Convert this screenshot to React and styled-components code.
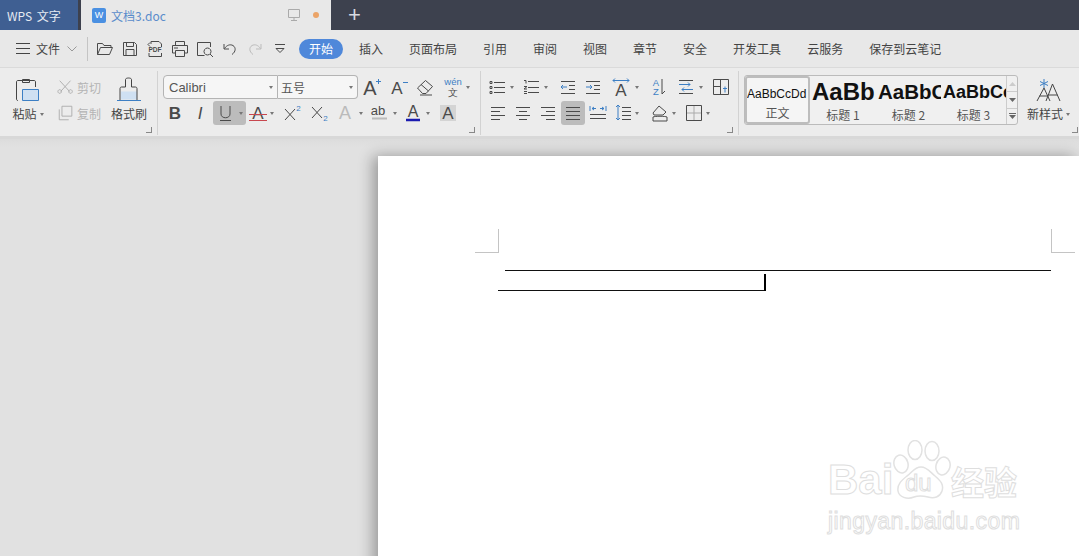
import React from 'react';
import styled, { createGlobalStyle } from 'styled-components';

const INK = '#4a4a4a';
const BLUE = '#3d7fc4';

const Svg = ({ size = 20, children }) => (
  <svg width={size} height={size} viewBox="0 0 20 20" fill="none" stroke={INK} strokeWidth="1" overflow="visible">
    {children}
  </svg>
);

const Letter = ({ x = 10, y = 16, s = 17, c = INK, w = 400, i = false, children }) => (
  <text
    x={x}
    y={y}
    fontSize={s}
    fill={c}
    stroke="none"
    fontWeight={w}
    fontStyle={i ? 'italic' : 'normal'}
    fontFamily="'Liberation Sans', sans-serif"
    textAnchor="middle"
  >
    {children}
  </text>
);

const Lines = ({ rows }) =>
  rows.map(([x1, x2, y, c], n) => <path key={n} d={`M${x1} ${y}.5H${x2}`} stroke={c || INK} />);

const ICONS = {
  open: <path d="M2.500 15.500v-11h5l1.500 2h7v2M2.500 15.500h12l3-7H5.500z" />,
  save: <path d="M3.500 3.500h11l2 2v11h-13zM6.500 3.500v4h7v-4M6 16.500v-6h8v6" />,
  pdf: (
    <>
      <path d="M6 5V2.500h8l2.500 2.500v3M4 14v3.500h12.500V14M3 5.500l2-2M3 5.500l2 2" />
      <Letter y={12.500} s={6.500} w={700}>PDF</Letter>
    </>
  ),
  print: <path d="M5.500 6V2.500h9V6M5 14H2.500V6.500h15V14H15M5.500 11.500h9v6h-9zM4 9h4" />,
  preview: <path d="M15.500 8V3.500h-13v13h7M12.500 9a3.500 3.500 0 1 0 .01 0M15 15l3 3" />,
  undo: <path d="M4 5v5h5M4.500 9.500C7 6 10 5 13 6.500c3 2 3 6-1 9" />,
  redo: <path d="M16 5v5h-5M15.500 9.500C13 6 10 5 7 6.500c-3 2-3 6 1 9" stroke="#bbb" />,
  more: <path d="M5 5.500h10M6 9.500l4 4 4-4z" />,
  fontUp: (
    <>
      <Letter x={8} y={18} s={20}>A</Letter>
      <path d="M14 4.500h5M16.500 2v5" stroke={BLUE} />
    </>
  ),
  fontDown: (
    <>
      <Letter x={8} y={17} s={17}>A</Letter>
      <path d="M14 5.500h5" stroke={BLUE} />
    </>
  ),
  eraser: <path d="M2.500 11l8-7.500 7 6-6.500 7H7.500zM6 7.500l7.500 6.500M5 18h12" />,
  wen: (
    <>
      <Letter y={8} s={9.500} c={BLUE}>wén</Letter>
      <Letter y={19} s={10}>文</Letter>
    </>
  ),
  bold: <Letter s={17} w={700}>B</Letter>,
  italic: <Letter s={17} i>I</Letter>,
  under: <path d="M5 3v8c0 5 9 5 9 0V3M4 17.500h11" />,
  strike: (
    <>
      <Letter s={17}>A</Letter>
      <path d="M1 11.500h18M1 17.500h18" stroke="#c8474f" />
    </>
  ),
  sup: (
    <>
      <path d="M3 6l10 11M13 6L3 17" />
      <Letter x={16.500} y={8} s={8} c={BLUE}>2</Letter>
    </>
  ),
  sub: (
    <>
      <path d="M3 4l10 11M13 4L3 15" />
      <Letter x={16.500} y={18} s={8} c={BLUE}>2</Letter>
    </>
  ),
  fx: <Letter s={18} c="#bbb">A</Letter>,
  mark: (
    <>
      <Letter x={8} y={12} s={13}>ab</Letter>
      <path d="M2 15.500h15" stroke="#bbb" strokeWidth="2" />
    </>
  ),
  color: (
    <>
      <Letter y={14} s={16}>A</Letter>
      <path d="M3 17h14" stroke="#1b1bb0" strokeWidth="2.500" />
    </>
  ),
  box: (
    <>
      <path d="M2 2h16v16H2z" fill="#d4d4d4" stroke="none" />
      <Letter s={17}>A</Letter>
    </>
  ),
  bullets: (
    <>
      <path d="M2 4.500h2v2H2zM2 9.500h2v2H2zM2 14.500h2v2H2z" />
      <Lines rows={[[6, 17, 5], [6, 17, 10], [6, 17, 15]]} />
    </>
  ),
  number: (
    <>
      <path d="M2 3.500h2v3M2 9.500h3l-3 2.500h3M2 14.500h3M2 16.500h3" />
      <Lines rows={[[6, 17, 4], [6, 17, 10], [6, 17, 15]]} />
    </>
  ),
  outdent: (
    <>
      <Lines rows={[[3, 17, 4], [11, 17, 8], [11, 17, 12], [3, 17, 16]]} />
      <path d="M9 10H3M5 8l-2 2 2 2" stroke={BLUE} />
    </>
  ),
  indent: (
    <>
      <Lines rows={[[3, 17, 4], [11, 17, 8], [11, 17, 12], [3, 17, 16]]} />
      <path d="M3 10h6M7 8l2 2-2 2" stroke={BLUE} />
    </>
  ),
  width: (
    <>
      <Letter y={18.500} s={17}>A</Letter>
      <path d="M2 3.500h16M4 1.500l-2 2 2 2M16 1.500l2 2-2 2" stroke={BLUE} />
    </>
  ),
  sort: (
    <>
      <Letter x={7} y={9} s={9.500} c={BLUE}>A</Letter>
      <Letter x={7} y={18} s={9.500} c={BLUE}>Z</Letter>
      <path d="M13 2v15l3-3" />
    </>
  ),
  para: (
    <>
      <Lines rows={[[3, 17, 3], [3, 17, 16]]} />
      <path d="M3 7.500h11M12 5.500l2 2-2 2M17 12.500H6M8 10.500l-2 2 2 2" stroke={BLUE} />
    </>
  ),
  table: (
    <>
      <path d="M2.500 2.500h15v15h-15zM2.500 9.500h7M9.500 2.500v15" />
      <path d="M12 11.500h4M14 9.500v6" stroke={BLUE} />
    </>
  ),
  left: <Lines rows={[[3, 17, 4], [3, 12, 8], [3, 17, 12], [3, 12, 16]]} />,
  center: <Lines rows={[[3, 17, 4], [6, 14, 8], [3, 17, 12], [6, 14, 16]]} />,
  right: <Lines rows={[[3, 17, 4], [8, 17, 8], [3, 17, 12], [8, 17, 16]]} />,
  justify: <Lines rows={[[3, 17, 4], [3, 17, 8], [3, 17, 12], [3, 17, 16]]} />,
  spread: (
    <>
      <Lines rows={[[2, 18, 11], [2, 18, 15]]} />
      <path d="M2 3v5M18 3v5M4 5.500h4M6 4l-2 1.500L6 7M12 5.500h4M14 4l2 1.500L14 7" stroke={BLUE} />
    </>
  ),
  spacing: (
    <>
      <Lines rows={[[9, 18, 4], [9, 18, 8], [9, 18, 12], [9, 18, 16]]} />
      <path d="M5 2v15M3 4l2-2 2 2M3 15l2 2 2-2" stroke={BLUE} />
    </>
  ),
  fill: <path d="M3 10l6-7 7 6-3 3H4zM3 14c2-1 12-1 14 0v4H3z" />,
  border: (
    <>
      <path d="M2.500 2.500h15v15h-15z" />
      <path d="M10 3v14M3 10h14" stroke="#aaa" />
    </>
  ),
};

const FONT_ROW_1 = [
  { w: 28, icon: 'fontUp' },
  { w: 25, icon: 'fontDown' },
  { w: 28, icon: 'eraser' },
  { w: 27, icon: 'wen' },
  { w: 8, arrow: true },
];

const FONT_ROW_2 = [
  { w: 24, icon: 'bold' },
  { w: 26, icon: 'italic' },
  { w: 33, icon: 'under', active: true, arrowInside: true },
  { w: 24, icon: 'strike' },
  { w: 8, arrow: true },
  { w: 28, icon: 'sup' },
  { w: 25, icon: 'sub' },
  { w: 28, icon: 'fx' },
  { w: 7, arrow: true },
  { w: 27, icon: 'mark' },
  { w: 7, arrow: true },
  { w: 26, icon: 'color' },
  { w: 9, arrow: true },
  { w: 26, icon: 'box' },
];

const PARA_ROW_1 = [
  { w: 24, icon: 'bullets' },
  { w: 10, arrow: true },
  { w: 24, icon: 'number' },
  { w: 12, arrow: true },
  { w: 24, icon: 'outdent' },
  { w: 26, icon: 'indent' },
  { w: 29, icon: 'width' },
  { w: 11, arrow: true },
  { w: 26, icon: 'sort' },
  { w: 27, icon: 'para' },
  { w: 10, arrow: true },
  { w: 24, icon: 'table' },
];

const PARA_ROW_2 = [
  { w: 24, icon: 'left' },
  { w: 25, icon: 'center' },
  { w: 26, icon: 'right' },
  { w: 24, icon: 'justify', active: true },
  { w: 26, icon: 'spread' },
  { w: 24, icon: 'spacing' },
  { w: 13, arrow: true },
  { w: 24, icon: 'fill' },
  { w: 10, arrow: true },
  { w: 24, icon: 'border' },
  { w: 10, arrow: true },
];

const QUICK = ['open', 'save', 'pdf', 'print', 'preview', 'undo', 'redo', 'more'];
const MENU = ['插入', '页面布局', '引用', '审阅', '视图', '章节', '安全', '开发工具', '云服务', '保存到云笔记'];
const STYLES = [
  { name: '标题 1', size: 24, sample: 'AaBb', w: 66 },
  { name: '标题 2', size: 20.500, sample: 'AaBbCc', w: 65 },
  { name: '标题 3', size: 18, sample: 'AaBbCcDd', w: 65 },
];

const ToolRow = ({ items }) => (
  <Row>
    {items.map((item, n) =>
      item.arrow ? (
        <ArrowSlot key={n} $w={item.w}>
          <Caret />
        </ArrowSlot>
      ) : (
        <Tool key={n} $w={item.w} $active={item.active}>
          <Svg>{ICONS[item.icon]}</Svg>
          {item.arrowInside && <Caret />}
        </Tool>
      ),
    )}
  </Row>
);

const App = () => (
  <>
    <GlobalStyle />
    <TitleBar>
      <AppTab>WPS 文字</AppTab>
      <DocTab>
        <DocIcon>W</DocIcon>
        <DocName>文档3.doc</DocName>
        <TabIcons>
          <svg width="14" height="14" viewBox="0 0 14 14" fill="none" stroke="#aaa">
            <path d="M1.500 1.500h11v8h-11zM7 9.500v3M4 12.500h6" />
          </svg>
          <UnsavedDot />
        </TabIcons>
      </DocTab>
      <NewTab>+</NewTab>
    </TitleBar>

    <MenuBar>
      <Burger>
        <svg width="14" height="11" viewBox="0 0 14 11" stroke="#444">
          <path d="M0 .5h14M0 5.500h14M0 10.500h14" />
        </svg>
      </Burger>
      <FileLabel>文件</FileLabel>
      <svg width="10" height="6" viewBox="0 0 10 6" fill="none" stroke="#999">
        <path d="M0.500 0.500L5 5l4.500-4.500" />
      </svg>
      <MenuDivider />
      {QUICK.map(icon => (
        <QuickTool key={icon}>
          <Svg>{ICONS[icon]}</Svg>
        </QuickTool>
      ))}
      <ActivePill>开始</ActivePill>
      <MenuItems>
        {MENU.map(label => (
          <MenuItem key={label}>{label}</MenuItem>
        ))}
      </MenuItems>
    </MenuBar>

    <Ribbon>
      <ClipGroup>
        <BigTool $w={54}>
          <svg width="26" height="26" viewBox="0 0 26 26" fill="none" stroke="#444">
            <path d="M3 23.500c-1 0-1.500-.5-1.500-1.500V5c0-1 .5-1.500 1.500-1.500h16c1 0 1.500.5 1.500 1.500v5" />
            <path d="M7.500 5.500v-3h7v3z" />
            <path d="M7.500 12.500h16v11h-16z" fill="#cfe0f2" stroke="#3d7fc4" />
          </svg>
          <BigLabel>
            粘贴
            <Caret />
          </BigLabel>
        </BigTool>
        <ClipColumn>
          <ClipItem>
            <Svg size={18}>
              <path d="M3 3l11 12M15 3L4 15" stroke="#aaa" />
              <path d="M3 13a2 2 0 1 0 .01 0M15 13a2 2 0 1 0 .01 0" stroke="#aaa" />
            </Svg>
            剪切
          </ClipItem>
          <ClipItem>
            <Svg size={18}>
              <path d="M5.500 2.500h11v11h-11zM2.500 6v11.500H13" stroke="#aaa" />
            </Svg>
            复制
          </ClipItem>
        </ClipColumn>
        <BigTool $w={36}>
          <svg width="26" height="26" viewBox="0 0 26 26" fill="none" stroke="#444">
            <path d="M5 14.500h16v8H5z" fill="#cfe0f2" stroke="none" />
            <path d="M9.500 10V2.500c0-2 6-2 6 0V10h4c.8 0 1.500.7 1.500 1.500V23M9.500 10h-4c-.8 0-1.500.7-1.500 1.500V23" />
            <path d="M1 23.500h24" stroke="#3d7fc4" />
          </svg>
          <BigLabel>格式刷</BigLabel>
        </BigTool>
        <Launcher />
      </ClipGroup>

      <FontGroup>
        <Row>
          <FontSelect $w={115}>
            Calibri
            <Caret />
          </FontSelect>
          <FontSelect $w={80} $last>
            五号
            <Caret />
          </FontSelect>
          <ToolRow items={FONT_ROW_1} />
        </Row>
        <ToolRow items={FONT_ROW_2} />
        <Launcher />
      </FontGroup>

      <ParaGroup>
        <ToolRow items={PARA_ROW_1} />
        <ToolRow items={PARA_ROW_2} />
        <Launcher />
      </ParaGroup>

      <StylesGroup>
        <Gallery>
          <StyleCard $w={65} $selected>
            <StyleSample $size={12} $weight={400} $pad={0}>AaBbCcDd</StyleSample>
            <StyleName>正文</StyleName>
          </StyleCard>
          {STYLES.map(item => (
            <StyleCard key={item.name} $w={item.w}>
              <StyleSample $size={item.size} $weight={700} $pad={2}>{item.sample}</StyleSample>
              <StyleName>{item.name}</StyleName>
            </StyleCard>
          ))}
          <GalleryScroll>
            <ScrollBtn>
              <svg width="7" height="4" viewBox="0 0 7 4"><path d="M3.500 0L7 4H0z" fill="#ccc" /></svg>
            </ScrollBtn>
            <ScrollBtn>
              <svg width="7" height="4" viewBox="0 0 7 4"><path d="M3.500 4L7 0H0z" fill="#666" /></svg>
            </ScrollBtn>
            <ScrollBtn>
              <svg width="7" height="6" viewBox="0 0 7 6" stroke="#666" fill="#666">
                <path d="M0 .5h7" />
                <path d="M3.500 6L7 2H0z" stroke="none" />
              </svg>
            </ScrollBtn>
          </GalleryScroll>
        </Gallery>
        <NewStyle>
          <svg width="26" height="26" viewBox="0 0 26 26" fill="none" stroke="#444">
            <path d="M8 2v9M4 4.500l8 4M12 4.500l-8 4" stroke="#3d7fc4" />
            <path d="M1 24l7-13 6 13M3.500 19h9M10 24l6.500-17L24 24M12.500 18h9" />
          </svg>
          <BigLabel>
            新样式
            <Caret />
          </BigLabel>
        </NewStyle>
        <Launcher $right={1} />
      </StylesGroup>
    </Ribbon>

    <Workspace>
      <Page>
        <CropRow>
          <CropMark $side="left" />
          <CropMark $side="right" />
        </CropRow>
        <UpperLine />
        <LowerLine>
          <TextCursor />
        </LowerLine>
        <Watermark>
          <LogoRow>
            <LogoLatin>Bai</LogoLatin>
            <PawBox>
              <svg width="58" height="60" viewBox="0 0 58 60" fill="#fff" stroke="#e2e2e2" strokeWidth="1.500">
                <ellipse cx="8" cy="24" rx="7" ry="9" transform="rotate(-15 8 24)" />
                <ellipse cx="22" cy="10" rx="7" ry="9.500" />
                <ellipse cx="39" cy="11" rx="7" ry="9.500" />
                <ellipse cx="50" cy="26" rx="7" ry="9" transform="rotate(15 50 26)" />
                <path d="M28 27c6 0 9 5 14 9 6 5 9 9 7 15-2 6-8 8-14 6-4-1-9-2-14 0-7 3-15 0-16-6-1-7 4-11 9-15 5-3 7-9 14-9z" />
              </svg>
              <PawText>du</PawText>
            </PawBox>
            <LogoCjk>经验</LogoCjk>
          </LogoRow>
          <LogoUrl>jingyan.baidu.com</LogoUrl>
        </Watermark>
      </Page>
    </Workspace>
  </>
);

const GlobalStyle = createGlobalStyle`
  html, body {
    margin: 0;
    height: 100%;
    overflow: hidden;
    background: #e1e1e1;
  }
  body {
    font-family: "Noto Sans CJK SC", "Liberation Sans", sans-serif;
    font-size: 12px;
    color: #444;
  }
`;

const TitleBar = styled.header`
  display: flex;
  height: 30px;
  background: #3d414e;
`;

const AppTab = styled.div`
  display: flex;
  align-items: center;
  width: 78px;
  padding-left: 7px;
  box-sizing: border-box;
  background: #3f5f92;
  color: #e6ebf2;
  word-spacing: 2px;
`;

const DocTab = styled.div`
  display: flex;
  align-items: center;
  width: 250px;
  margin-left: 3px;
  padding: 0 12px 0 11px;
  box-sizing: border-box;
  background: #e8e8e8;
`;

const DocIcon = styled.span`
  display: flex;
  align-items: center;
  justify-content: center;
  width: 14px;
  height: 15px;
  border-radius: 2px;
  background: #4a90e2;
  color: #fff;
  font: 400 9px "Liberation Sans", sans-serif;
`;

const DocName = styled.span`
  margin-left: 5px;
  color: #5a8ccb;
`;

const TabIcons = styled.span`
  display: flex;
  align-items: center;
  gap: 12px;
  margin-left: auto;
`;

const UnsavedDot = styled.i`
  width: 6px;
  height: 6px;
  border-radius: 50%;
  background: #eba468;
`;

const NewTab = styled.div`
  margin-left: 17px;
  color: #d8dae0;
  font: 300 22px/29px "Liberation Sans", sans-serif;
`;

const MenuBar = styled.nav`
  display: flex;
  align-items: center;
  height: 38px;
  padding-left: 16px;
  box-sizing: border-box;
  background: #e8e8e8;
  border-bottom: 1px solid #dadada;
`;

const Burger = styled.span`
  display: flex;
  margin-right: 6px;
`;

const FileLabel = styled.span`
  width: 31px;
`;

const MenuDivider = styled.i`
  width: 1px;
  height: 24px;
  margin: 0 4px 0 10px;
  background: #c4c4c4;
`;

const QuickTool = styled.span`
  display: flex;
  justify-content: center;
  width: 25px;
`;

const ActivePill = styled.span`
  width: 44px;
  height: 20px;
  margin: 0 16px 0 7px;
  border-radius: 10px;
  background: #4f88da;
  color: #fff;
  line-height: 20px;
  text-align: center;
`;

const MenuItems = styled.div`
  display: flex;
  gap: 26px;
`;

const MenuItem = styled.span`
  color: #444;
  white-space: nowrap;
`;

const Ribbon = styled.section`
  display: flex;
  height: 71px;
  background: #ececec;
  border-bottom: 3px solid #d8d8d8;
  box-sizing: border-box;
  overflow: hidden;
`;

const Group = styled.div`
  position: relative;
  box-sizing: border-box;
  height: 64px;
  margin-top: 3px;
  border-right: 1px solid #d2d2d2;
`;

const ClipGroup = styled(Group)`
  display: flex;
  width: 158px;
  padding-left: 1px;
`;

const FontGroup = styled(Group)`
  width: 323px;
  padding: 3px 0 0 5px;
`;

const ParaGroup = styled(Group)`
  width: 258px;
  padding: 3px 0 0 5px;
`;

const StylesGroup = styled(Group)`
  display: flex;
  width: 340px;
  padding: 4px 0 0 5px;
  border-right: 0;
`;

const Row = styled.div`
  display: flex;
  align-items: center;
  height: 26px;
`;

const Tool = styled.span`
  display: flex;
  flex: none;
  align-items: center;
  justify-content: center;
  gap: 3px;
  box-sizing: border-box;
  width: ${p => p.$w}px;
  height: 24px;
  border-radius: 3px;
  background: ${p => (p.$active ? '#bcbcbc' : 'transparent')};
`;

const ArrowSlot = styled.span`
  display: flex;
  flex: none;
  width: ${p => p.$w}px;
`;

const Caret = styled.i`
  flex: none;
  width: 0;
  height: 0;
  border-top: 3px solid #777;
  border-left: 2.500px solid transparent;
  border-right: 2.500px solid transparent;
`;

const BigTool = styled.div`
  display: flex;
  flex: none;
  flex-direction: column;
  align-items: center;
  width: ${p => p.$w}px;
  padding-top: 6px;
  gap: 2px;
`;

const BigLabel = styled.span`
  display: flex;
  align-items: center;
  gap: 3px;
  white-space: nowrap;
  line-height: 18px;
`;

const ClipColumn = styled.div`
  display: flex;
  flex: none;
  flex-direction: column;
  width: 56px;
  padding: 3px 0 0 2px;
  box-sizing: border-box;
`;

const ClipItem = styled.span`
  display: flex;
  align-items: center;
  gap: 2px;
  height: 26px;
  color: #b4b4b4;
`;

const Launcher = styled.i`
  position: absolute;
  right: ${p => p.$right ?? 5}px;
  bottom: 2px;
  width: 5px;
  height: 5px;
  border-right: 1px solid #888;
  border-bottom: 1px solid #888;
`;

const FontSelect = styled.span`
  display: flex;
  flex: none;
  align-items: center;
  justify-content: space-between;
  box-sizing: border-box;
  width: ${p => p.$w}px;
  height: 24px;
  padding: 0 4px 0 ${p => (p.$last ? 3 : 5)}px;
  background: #f6f6f6;
  border: 1px solid #b4b4b4;
  border-left-width: ${p => (p.$last ? 0 : 1)}px;
  border-radius: ${p => (p.$last ? '0 4px 4px 0' : '4px 0 0 4px')};
  font-family: "Liberation Sans", "Noto Sans CJK SC", sans-serif;
  font-size: ${p => (p.$last ? 12 : 13)}px;
  color: #555;
`;

const Gallery = styled.div`
  display: flex;
  flex: none;
  box-sizing: border-box;
  width: 274px;
  height: 50px;
  background: #f0f0f0;
  border: 1px solid #bbb;
  border-radius: 3px;
`;

const StyleCard = styled.div`
  display: flex;
  flex: none;
  flex-direction: column;
  align-items: center;
  justify-content: space-between;
  box-sizing: border-box;
  width: ${p => p.$w}px;
  height: 48px;
  padding: 2px 0 1px;
  overflow: hidden;
  background: ${p => (p.$selected ? '#f5f5f5' : 'transparent')};
  border: ${p => (p.$selected ? '2px solid #bdbdbd' : '0')};
  border-radius: 3px;
`;

const StyleSample = styled.div`
  width: 100%;
  overflow: hidden;
  height: 28px;
  line-height: 28px;
  padding-left: ${p => p.$pad}px;
  box-sizing: border-box;
  white-space: nowrap;
  font-family: "Liberation Sans", sans-serif;
  font-size: ${p => p.$size}px;
  font-weight: ${p => p.$weight};
  color: #111;
`;

const StyleName = styled.div`
  line-height: 16px;
  color: #555;
`;

const GalleryScroll = styled.div`
  display: flex;
  flex-direction: column;
  flex: 1;
  border-left: 1px solid #ccc;
`;

const ScrollBtn = styled.span`
  display: flex;
  flex: 1;
  align-items: center;
  justify-content: center;
  border-bottom: 1px solid #ccc;
  &:last-child {
    border-bottom: 0;
  }
`;

const NewStyle = styled.div`
  display: flex;
  flex-direction: column;
  align-items: center;
  margin-left: 9px;
  padding-top: 2px;
  gap: 2px;
`;

const Workspace = styled.main`
  height: 417px;
  padding: 17px 0 0 378px;
  box-sizing: border-box;
  overflow: hidden;
  background: linear-gradient(#dcdcdc, #e1e1e1 8px);
`;

const Page = styled.article`
  position: relative;
  height: 500px;
  background: #fff;
  box-shadow: -5px 0 14px rgba(0, 0, 0, 0.32);
`;

const CropRow = styled.div`
  display: flex;
  justify-content: space-between;
  padding: 73px 4px 0 97px;
`;

const CropMark = styled.i`
  width: 23px;
  height: 23px;
  border-bottom: 1px solid #c4c4c4;
  border-${p => (p.$side === 'left' ? 'right' : 'left')}: 1px solid #c4c4c4;
`;

const UpperLine = styled.div`
  height: 1px;
  margin: 17px 28px 0 127px;
  background: #111;
`;

const LowerLine = styled.div`
  position: relative;
  width: 267px;
  height: 1px;
  margin: 19px 0 0 120px;
  background: #111;
`;

const TextCursor = styled.i`
  position: absolute;
  right: -1px;
  bottom: 0;
  width: 2px;
  height: 17px;
  background: #000;
`;

const Watermark = styled.div`
  position: absolute;
  left: 450px;
  top: 284px;
  width: 195px;
`;

const LogoRow = styled.div`
  display: flex;
  align-items: flex-end;
  height: 60px;
`;

const outlined = `
  color: #fff;
  -webkit-text-stroke: 1px #dedede;
`;

const LogoLatin = styled.span`
  width: 65px;
  ${outlined}
  font: 700 42px/40px "Liberation Sans", sans-serif;
`;

const PawBox = styled.span`
  position: relative;
  display: flex;
  flex: none;
  width: 58px;
  height: 60px;
`;

const PawText = styled.span`
  position: absolute;
  left: 12px;
  bottom: 3px;
  ${outlined}
  font: 400 24px/28px "Liberation Sans", sans-serif;
`;

const LogoCjk = styled.span`
  ${outlined}
  font: 700 33px/38px "Noto Sans CJK SC", sans-serif;
`;

const LogoUrl = styled.div`
  margin-top: 8px;
  ${outlined}
  font: 400 23px/26px "Liberation Sans", sans-serif;
  letter-spacing: 0.4px;
  white-space: nowrap;
`;

export default App;
